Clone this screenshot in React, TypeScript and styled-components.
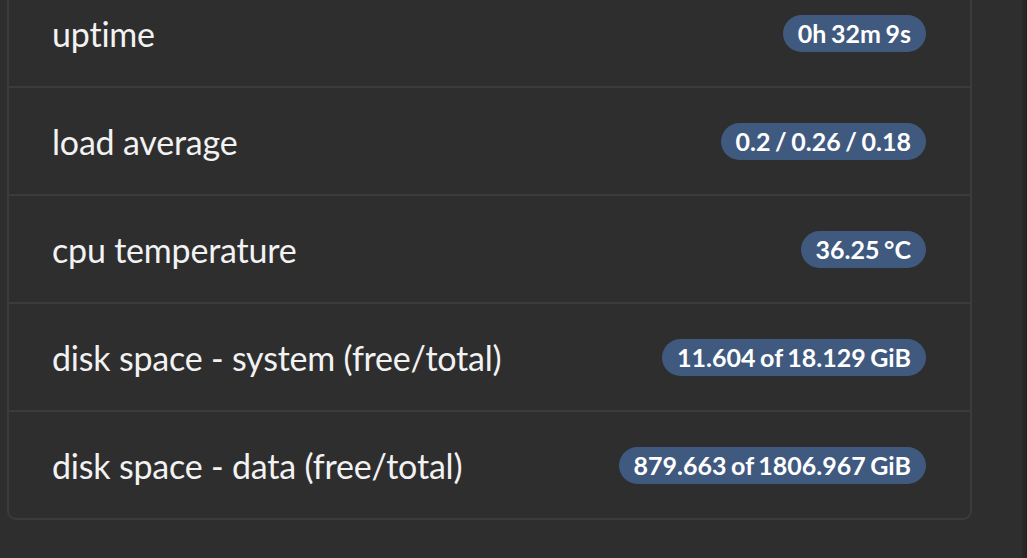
import React from 'react'
import styled, { createGlobalStyle } from 'styled-components'

const GlobalStyle = createGlobalStyle`
  html, body {
    margin: 0;
    padding: 0;
    height: 100%;
    background: #2e2e2e;
    overflow: hidden;
  }
  #root {
    height: 100%;
  }
`

const Screen = styled.div`
  display: flex;
  height: 100%;
  font-family: Lato, 'Open Sans', sans-serif;
  color: #f2f2f2;
`
const Content = styled.main`
  flex: 1;
  padding: 0 50px 0 7px;
`
const Gutter = styled.div`
  width: 5px;
  background: linear-gradient(to right, #2a2a2a, #232323);
`
const Panel = styled.section`
  margin-top: -20px;
  border: 2px solid #3b3b3b;
  border-top: none;
  border-radius: 0 0 9px 9px;
`
const Row = styled.div`
  display: flex;
  align-items: center;
  justify-content: space-between;
  height: 106px;
  padding: 0 44px 0 43px;
  & + & {
    border-top: 2px solid #3b3b3b;
  }
`
const Label = styled.span`
  font-size: 34px;
  font-weight: 400;
  letter-spacing: -0.2px;
`
const Badge = styled.span`
  display: inline-flex;
  align-items: center;
  height: 37px;
  padding: 0 15px;
  border-radius: 19px;
  background: #3f5a7e;
  color: #ffffff;
  font-size: 25px;
  font-weight: 700;
  word-spacing: -1.5px;
`

const stats = [
  { name: 'uptime', value: '0h 32m 9s' },
  { name: 'load average', value: '0.2 / 0.26 / 0.18' },
  { name: 'cpu temperature', value: '36.25 °C' },
  { name: 'disk space - system (free/total)', value: '11.604 of 18.129 GiB' },
  { name: 'disk space - data (free/total)', value: '879.663 of 1806.967 GiB' },
]

const App: React.FunctionComponent = () => (
  <Screen>
    <GlobalStyle />
    <Content>
      <Panel>
        {stats.map((stat) => (
          <Row key={stat.name}>
            <Label>{stat.name}</Label>
            <Badge>{stat.value}</Badge>
          </Row>
        ))}
      </Panel>
    </Content>
    <Gutter />
  </Screen>
)

export default App
